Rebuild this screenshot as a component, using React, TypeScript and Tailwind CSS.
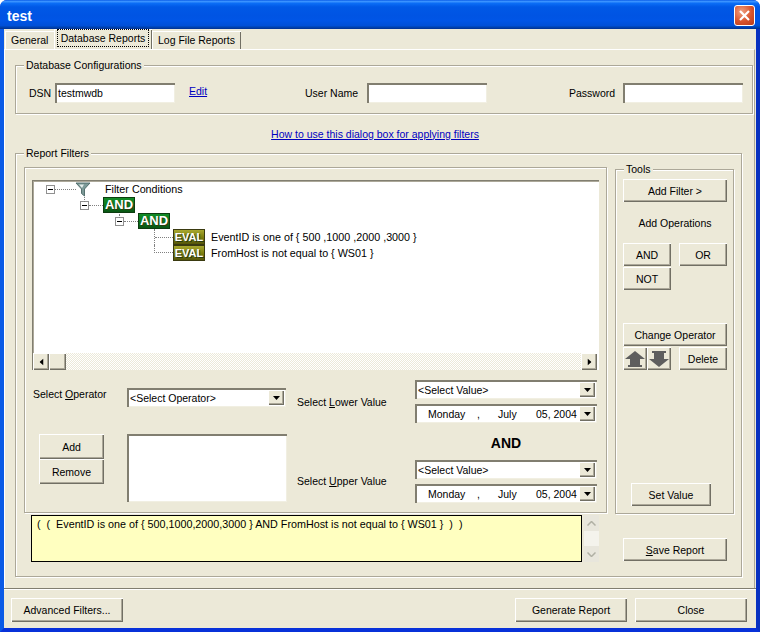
import React from "react";

const raised = "bg-[#ece9d8] text-black shadow-[inset_1px_1px_0_#fff,inset_-1px_-1px_0_#716f64,inset_-2px_-2px_0_#aca899]";
const sunken = "bg-white shadow-[inset_2px_2px_0_#817e70,inset_-1px_-1px_0_#f1efe2]";
const group = "relative border border-[#aca899] shadow-[1px_1px_0_#fff,inset_1px_1px_0_#fff]";
const legend = "absolute top-[-8px] left-[8px] bg-[#ece9d8] px-[2px] leading-[14px]";

function Btn({ className = "", children }: { className?: string; children?: React.ReactNode }) {
  return <button className={`${raised} flex items-center justify-center cursor-default ${className}`}>{children}</button>;
}

function Arrow({ dir }: { dir: "up" | "down" | "left" | "right" }) {
  const rot = dir === "down" ? "" : dir === "up" ? "rotate-180" : dir === "left" ? "rotate-90" : "-rotate-90";
  return (
    <svg width="7" height="4" viewBox="0 0 7 4" className={rot}>
      <polygon points="0,0 7,0 3.5,4" fill="#000" />
    </svg>
  );
}

function Combo({ value, w, date }: { value?: string; w: string; date?: boolean }) {
  return (
    <div className={`${sunken} ${w} h-[19px] flex items-center justify-between pl-[3px] pr-[2px]`}>
      {date ? (
        <span className="flex flex-1 pl-[10px]">
          <span className="w-[49px]">Monday</span>
          <span className="w-[21px]">,</span>
          <span className="w-[38px]">July</span>
          <span className="whitespace-nowrap">05, 2004</span>
        </span>
      ) : (
        <span>{value}</span>
      )}
      <span className={`${raised} w-[16px] h-[15px] flex items-center justify-center`}>
        <Arrow dir="down" />
      </span>
    </div>
  );
}

function Badge({ text, kind }: { text: string; kind: "and" | "eval" }) {
  const c =
    kind === "and"
      ? "bg-[linear-gradient(#128a26,#0a7a1c_50%,#0a5514)] border-[#0c3d10] text-[13px]"
      : "bg-[linear-gradient(#a8a830,#7f8010_50%,#55560a)] border-[#3a3a10] text-[11px]";
  return (
    <span className={`${c} w-[32px] h-[16px] shrink-0 flex items-center justify-center text-white font-bold border [text-shadow:1px_1px_0_#2a3a10]`}>
      {text}
    </span>
  );
}

function Expander({ stem }: { stem?: string }) {
  return (
    <span className="relative w-[9px] h-[9px] border border-[#909090] bg-white flex items-center justify-center shrink-0">
      <span className="w-[5px] h-px bg-black" />
      {stem && <span className={`absolute left-[3px] border-l border-dotted border-[#808080] ${stem}`} />}
    </span>
  );
}

const dots = "border-t border-dotted border-[#808080]";

function Tree() {
  return (
    <div className="text-[10.75px] leading-[16px] h-[172px] overflow-hidden">
      <div className="flex items-center h-[16px] pl-[12px]">
        <Expander />
        <span className={`${dots} w-[21px]`} />
        <svg width="16" height="16" viewBox="0 0 16 16" className="-ml-px">
          <polygon points="1,2 15,2 9.5,8 9.5,15 6.5,12.5 6.5,8" fill="#7d9a98" stroke="#4a6664" strokeWidth="0.9" />
          <polygon points="4,3.5 9,3.5 7,7" fill="#e4ecea" />
        </svg>
        <span className="ml-[14px]">Filter Conditions</span>
      </div>
      <div className="flex items-center h-[16px] pl-[46px]">
        <Expander stem="-top-[5px] h-[5px]" />
        <span className={`${dots} w-[14px]`} />
        <Badge text="AND" kind="and" />
      </div>
      <div className="flex items-center h-[16px] pl-[81px]">
        <Expander stem="-top-[4px] h-[4px]" />
        <span className={`${dots} w-[14px]`} />
        <Badge text="AND" kind="and" />
      </div>
      <div className="flex items-center h-[16px] pl-[120px]">
        <span className="w-[19px] h-[16px] flex items-center border-l border-dotted border-[#808080]">
          <span className={`${dots} w-full`} />
        </span>
        <Badge text="EVAL" kind="eval" />
        <span className="ml-[6px]">EventID is one of {"{"} 500 ,1000 ,2000 ,3000 {"}"}</span>
      </div>
      <div className="flex items-center h-[16px] pl-[120px]">
        <span className="w-[19px] h-[8px] self-start border-l border-b border-dotted border-[#808080]" />
        <Badge text="EVAL" kind="eval" />
        <span className="ml-[6px]">FromHost is not equal to {"{"} WS01 {"}"}</span>
      </div>
    </div>
  );
}

function BigArrow({ down }: { down?: boolean }) {
  return (
    <svg width="20" height="16" viewBox="0 0 20 16" className={down ? "rotate-180" : ""}>
      <polygon points="10,0 20,8 15,8 15,14 17,14 17,16 3,16 3,14 5,14 5,8 0,8" fill="#5e5e5e" />
    </svg>
  );
}

function App() {
  return (
    <div className="w-[760px] h-[632px] bg-white overflow-hidden text-[10.5px] leading-[14px] text-black font-[Liberation_Sans,sans-serif]">
      <div className="w-full h-full flex flex-col rounded-t-[7px] overflow-hidden bg-[#0831d9]">
        <div className="h-[29px] shrink-0 flex items-center justify-between pl-[7px] pr-[5px] pt-[2px] bg-[linear-gradient(#0a5ce8,#3a93ff_5%,#0a6cf5_12%,#0058e6_24%,#0054e3_55%,#0055e6_70%,#0050d8_88%,#0040ab_95%,#003092)]">
          <span className="text-white font-bold text-[14px] mt-[1px]">test</span>
          <span className="w-[21px] h-[21px] rounded-[3px] border border-white bg-[radial-gradient(circle_at_35%_30%,#f0a080,#d8532c_55%,#b83a18)] flex items-center justify-center">
            <svg width="13" height="13" viewBox="0 0 13 13">
              <path d="M2 2 L11 11 M11 2 L2 11" stroke="#fff" strokeWidth="2.2" />
            </svg>
          </span>
        </div>
        <div className="flex-1 flex flex-col border-l-[4px] border-l-[#0a5ae6] border-r-[4px] border-r-[#0831c0] border-b-[4px] border-b-[#0831d9] bg-[#ece9d8]">
          <div className="h-[20px] shrink-0 flex items-end pl-[1px]">
            <span className="h-[18px] w-[49px] pl-[6px] flex items-center shadow-[inset_1px_1px_0_#fff]">General</span>
            <span className="h-[20px] w-[98px] pb-[3px] flex items-center justify-center shadow-[inset_1px_1px_0_#fff,inset_-1px_0_0_#716f64]">
              <span className="outline-1 outline-dotted outline-black px-[3px] py-[1px]">Database Reports</span>
            </span>
            <span className="h-[18px] w-[89px] flex items-center justify-center shadow-[inset_1px_1px_0_#fff,inset_-1px_0_0_#716f64]">Log File Reports</span>
          </div>

          <div className="h-[539px] shrink-0 border-t border-t-white border-r border-r-[#aca899] shadow-[inset_1px_0_0_#fff] mr-px pl-[11px] pr-[1px] pt-[15px]">
            <div className={`${group} h-[49px] flex items-center pl-[13px] pt-[6px]`}>
              <span className={legend}>Database Configurations</span>
              <span className="w-[26px]">DSN</span>
              <span className={`${sunken} w-[120px] h-[20px] pl-[3px] flex items-center`}>testmwdb</span>
              <a className="ml-[14px] w-[116px] text-[#0000c0] underline mb-[3px]">Edit</a>
              <span className="w-[62px]">User Name</span>
              <span className={`${sunken} w-[120px] h-[20px]`} />
              <span className="ml-[82px] w-[54px]">Password</span>
              <span className={`${sunken} w-[120px] h-[20px]`} />
            </div>

            <div className="h-[39px] flex items-center justify-center pr-[18px]">
              <a className="text-[#0000c0] underline">How to use this dialog box for applying filters</a>
            </div>

            <div className={`${group} w-[727px] h-[424px] pl-[8px] pt-[13px]`}>
              <span className={legend}>Report Filters</span>
              <div className="flex h-[346px]">
                <div className={`${group} w-[583px] shrink-0 pl-[7px] pt-[12px]`}>
                  <div className="w-[567px] h-[190px] bg-white shadow-[inset_1px_1px_0_#817e70,inset_2px_2px_0_#aca899] flex flex-col">
                    <div className="flex-1 pl-[2px] pt-[1px]"><Tree /></div>
                    <div className="h-[17px] flex ml-[1px] mr-[2px] bg-[repeating-conic-gradient(#ece9d8_0_25%,#fff_0_50%)] bg-[length:2px_2px]">
                      <span className={`${raised} w-[16px] flex items-center justify-center`}><Arrow dir="left" /></span>
                      <span className={`${raised} w-[17px]`} />
                      <span className="flex-1" />
                      <span className={`${raised} w-[16px] flex items-center justify-center`}><Arrow dir="right" /></span>
                    </div>
                  </div>
                  <div className="flex mt-[10px]">
                    <div className="w-[265px] shrink-0">
                      <div className="flex pt-[8px]">
                        <span className="w-[94px] ml-px -mt-[1px]">Select <u>O</u>perator</span>
                        <Combo value="<Select Operator>" w="w-[159px]" />
                      </div>
                      <div className="flex mt-[27px]">
                        <div className="w-[88px] pl-[7px] flex flex-col">
                          <Btn className="w-[65px] h-[25px]">Add</Btn>
                          <Btn className="w-[65px] h-[25px]">Remove</Btn>
                        </div>
                        <span className={`${sunken} w-[160px] h-[68px] ml-[7px]`} />
                      </div>
                    </div>
                    <div className="w-[118px] shrink-0 pt-[15px] pb-[15px] flex flex-col justify-between">
                      <span>Select <u>L</u>ower Value</span>
                      <span>Select <u>U</u>pper Value</span>
                    </div>
                    <div className="w-[182px] shrink-0 flex flex-col">
                      <Combo value="<Select Value>" w="w-[182px]" />
                      <Combo date w="w-[182px] mt-[5px]" />
                      <div className="h-[37px] pt-[3px] flex items-center justify-center font-bold text-[14px]">AND</div>
                      <Combo value="<Select Value>" w="w-[182px]" />
                      <Combo date w="w-[182px] mt-[5px]" />
                    </div>
                  </div>
                </div>

                <div className={`${group} ml-[8px] w-[119px] h-[345px] mt-[2px] pl-[7px] pt-[9px]`}>
                  <span className={legend}>Tools</span>
                  <Btn className="w-[104px] h-[23px]">Add Filter &gt;</Btn>
                  <div className="w-[104px] h-[41px] flex items-center justify-center">Add Operations</div>
                  <div className="flex gap-[8px]">
                    <Btn className="w-[48px] h-[23px]">AND</Btn>
                    <Btn className="w-[48px] h-[23px]">OR</Btn>
                  </div>
                  <Btn className="w-[48px] h-[23px] mt-px">NOT</Btn>
                  <Btn className="w-[104px] h-[23px] mt-[33px]">Change Operator</Btn>
                  <div className="flex mt-px">
                    <Btn className="w-[24px] h-[23px]"><BigArrow /></Btn>
                    <Btn className="w-[24px] h-[23px]"><BigArrow down /></Btn>
                    <Btn className="w-[48px] h-[23px] ml-[8px]">Delete</Btn>
                  </div>
                  <Btn className="w-[80px] h-[23px] mt-[113px] ml-[8px]">Set Value</Btn>
                </div>
              </div>
              <div className="flex mt-[2px] pl-[7px]">
                <div className="w-[551px] h-[47px] bg-[#ffffc0] border border-black pl-[5px] pt-[1px] text-[10.75px]">
                  ( &nbsp;( &nbsp;EventID is one of {"{"} 500,1000,2000,3000 {"}"} AND FromHost is not equal to {"{"} WS01 {"}"} &nbsp;) &nbsp;)
                </div>
                <div className="w-[15px] h-[47px] ml-[2px] bg-[#f4f3ec] flex flex-col justify-between">
                  <span className="h-[16px] flex items-center justify-center bg-[#e8e6dc]"><svg width="9" height="5" viewBox="0 0 9 5"><path d="M0.5 4.5 L4.5 0.5 L8.5 4.5" fill="none" stroke="#b0b0a4" strokeWidth="1.5" /></svg></span>
                  <span className="h-[16px] flex items-center justify-center bg-[#e8e6dc]"><svg width="9" height="5" viewBox="0 0 9 5"><path d="M0.5 0.5 L4.5 4.5 L8.5 0.5" fill="none" stroke="#b0b0a4" strokeWidth="1.5" /></svg></span>
                </div>
                <Btn className="w-[104px] h-[23px] ml-[24px] mt-[23px]"><span><u>S</u>ave Report</span></Btn>
              </div>
            </div>
          </div>

          <div className="flex-1 border-t border-t-[#817e70] shadow-[inset_0_1px_0_#fff] flex items-start pt-[9px] pl-[7px]">
            <Btn className="w-[112px] h-[24px]">Advanced Filters...</Btn>
            <Btn className="w-[112px] h-[24px] ml-[392px]">Generate Report</Btn>
            <Btn className="w-[112px] h-[24px] ml-[8px]">Close</Btn>
          </div>
        </div>
      </div>
    </div>
  );
}

export default App;
